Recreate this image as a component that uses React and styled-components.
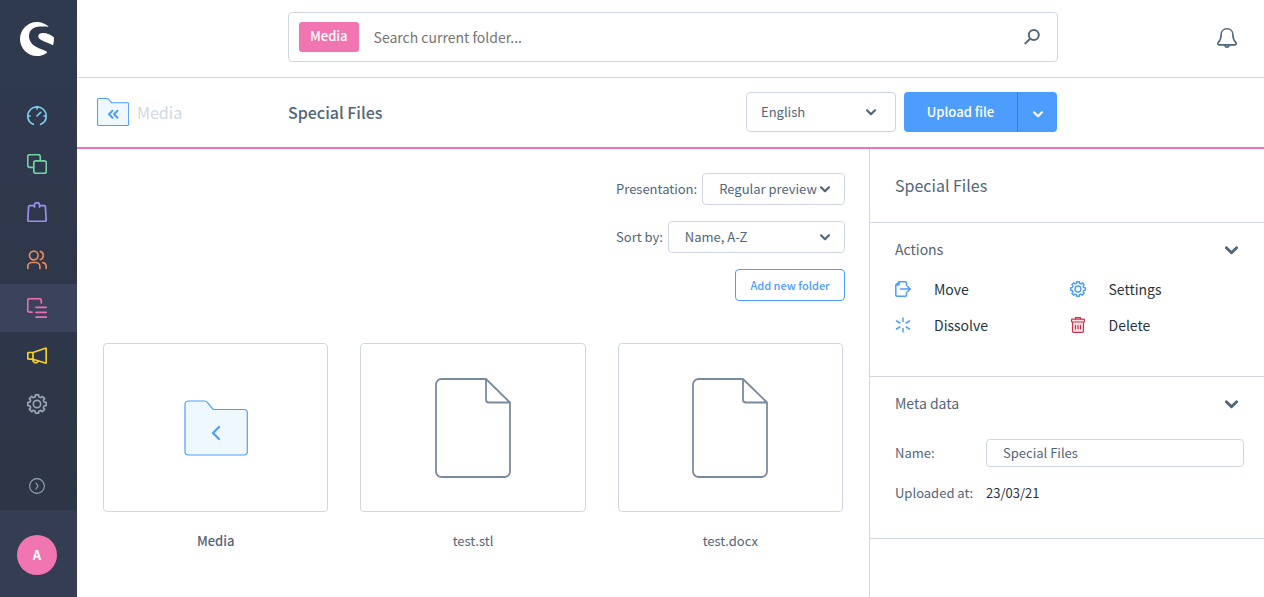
import React from "react";
import styled, { createGlobalStyle, css } from "styled-components";

const blue = "#4d9dff";
const pink = "#f075b1";
const line = "#d1d7e2";
const text = "#52667a";
const dark = "#29333d";

const GlobalStyle = createGlobalStyle`
  *, *::before, *::after { box-sizing: border-box; }
  body {
    margin: 0;
    background: #fff;
    color: ${text};
    font-family: "Noto Sans CJK SC", "Source Sans Pro", "Open Sans", sans-serif;
    font-size: 13px;
    line-height: 20px;
  }
  button, input, select { font: inherit; color: inherit; }
  button { cursor: pointer; }
  h1, h2, h3 { margin: 0; padding: 0; }
`;

const Shell = styled.div`
  display: flex;
  min-height: 100vh;
`;

const Sidebar = styled.aside`
  flex: none;
  width: 77px;
  display: flex;
  flex-direction: column;
  background: linear-gradient(180deg, #303a4f, #2d3445);
`;

const LogoLink = styled.a`
  display: flex;
  padding: 22px 0 36px 20px;
`;

const Nav = styled.nav`
  display: flex;
  flex-direction: column;
  flex: 1;
`;

const NavLink = styled.a`
  display: flex;
  align-items: center;
  height: 48px;
  padding-left: 27px;
  color: ${(p) => p.$color};
  background: ${(p) => (p.$active ? "#3a435b" : "transparent")};
`;

const Toggle = styled.button`
  display: flex;
  align-items: center;
  height: 48px;
  padding: 0 0 0 29px;
  border: 0;
  background: none;
  color: #9aa8b7;
`;

const UserArea = styled.div`
  height: 87px;
  padding: 25px 0 0 17px;
  background: #343d52;
`;

const Avatar = styled.button`
  width: 40px;
  height: 40px;
  padding: 0;
  border: 0;
  border-radius: 50%;
  background: ${pink};
  color: #fff;
  font-weight: 600;
`;

const Page = styled.div`
  flex: 1;
  min-width: 0;
  display: flex;
  flex-direction: column;
`;

const barGrid = css`
  display: grid;
  grid-template-columns: 211px minmax(0, 1fr) 206px;
  align-items: center;
`;

const TopBar = styled.header`
  ${barGrid}
  height: 78px;
  padding-bottom: 3px;
  border-bottom: 1px solid ${line};
`;

const Search = styled.form`
  grid-column: 2;
  display: flex;
  align-items: center;
  height: 50px;
  padding: 0 17px 0 10px;
  border: 1px solid ${line};
  border-radius: 4px;
`;

const SearchTag = styled.span`
  padding: 4px 11px 6px;
  border-radius: 3px;
  background: ${pink};
  color: #fff;
  font-weight: 500;
`;

const SearchInput = styled.input`
  flex: 1;
  min-width: 0;
  padding: 0 15px;
  border: 0;
  outline: 0;
  background: none;
  font-size: 14px;
  &::placeholder { color: #757575; opacity: 1; }
`;

const PlainButton = styled.button`
  display: flex;
  padding: 0;
  border: 0;
  background: none;
`;

const BellSlot = styled.div`
  display: flex;
  justify-content: flex-end;
  padding: 2px 27px 0 0;
`;

const SmartBar = styled.div`
  ${barGrid}
  height: 71px;
  padding-bottom: 1px;
  border-bottom: 2px solid ${pink};
`;

const BackLink = styled.a`
  display: flex;
  align-items: center;
  gap: 8px;
  padding-left: 20px;
  color: ${line};
  font-size: 16px;
  text-decoration: none;
`;

const SmartMain = styled.div`
  display: flex;
  align-items: center;
  gap: 8px;
  padding-right: 1px;
`;

const PageTitle = styled.h1`
  flex: 1;
  font-size: 16px;
  font-weight: 500;
`;

const SelectBox = styled.span`
  position: relative;
  display: flex;
  flex: ${(p) => (p.$width ? "none" : "1")};
  width: ${(p) => p.$width || "auto"};
  svg {
    position: absolute;
    right: ${(p) => p.$inset || "15px"};
    top: 50%;
    margin-top: -3px;
    pointer-events: none;
  }
`;

const Select = styled.select`
  appearance: none;
  width: 100%;
  height: ${(p) => p.$height};
  padding: 0 16px 0 ${(p) => p.$pad};
  border: 1px solid ${line};
  border-radius: 4px;
  background: #fff;
`;

const SplitButton = styled.div`
  display: flex;
  height: 40px;
  border-radius: 4px;
  overflow: hidden;
`;

const UploadButton = styled.button`
  width: ${(p) => p.$width};
  display: flex;
  align-items: center;
  justify-content: center;
  padding: ${(p) => (p.$menu ? "5px 0 0" : "0")};
  border: 0;
  border-left: ${(p) => (p.$menu ? "1px solid #3b7fd4" : "0")};
  background: ${blue};
  color: #fff;
  font-weight: 500;
`;

const Body = styled.div`
  flex: 1;
  display: grid;
  grid-template-columns: minmax(0, 1fr) 395px;
`;

const Library = styled.main`
  padding: 24px 24px 24px 26px;
`;

const Options = styled.div`
  width: 229px;
  margin-left: auto;
  display: flex;
  flex-direction: column;
  gap: 16px;
`;

const OptionRow = styled.label`
  display: flex;
  align-items: center;
  gap: 5px;
  white-space: nowrap;
`;

const OutlineButton = styled.button`
  align-self: flex-end;
  width: 110px;
  height: 32px;
  padding: 0;
  border: 1px solid ${blue};
  border-radius: 4px;
  background: #fff;
  color: ${blue};
  font-size: 11px;
  font-weight: 500;
`;

const MediaGrid = styled.div`
  display: grid;
  grid-template-columns: repeat(auto-fill, minmax(200px, 1fr));
  gap: 32px;
  padding: 42px 2px 0 0;
`;

const MediaItem = styled.a`
  display: flex;
  flex-direction: column;
  gap: 19px;
  color: ${text};
  text-align: center;
  text-decoration: none;
  font-weight: ${(p) => (p.$folder ? 500 : 400)};
`;

const Preview = styled.span`
  display: flex;
  align-items: center;
  justify-content: center;
  height: 169px;
  border: 1px solid ${line};
  border-radius: 4px;
`;

const Details = styled.aside`
  border-left: 1px solid ${line};
`;

const DetailsTitle = styled.h2`
  padding: 26px 25px 27px;
  font-size: 16px;
  font-weight: 400;
  border-bottom: 1px solid ${line};
`;

const Section = styled.section`
  padding: 16px 20px ${(p) => p.$bottom} 25px;
  border-bottom: 1px solid ${line};
`;

const SectionHead = styled.div`
  display: flex;
  align-items: flex-end;
  justify-content: space-between;
  padding-right: 6px;
  margin-bottom: ${(p) => p.$gap};
`;

const SectionTitle = styled.h3`
  font-size: 14px;
  font-weight: 400;
`;

const CollapseButton = styled(PlainButton)`
  padding-bottom: 4px;
`;

const ActionGrid = styled.div`
  display: grid;
  grid-template-columns: 1fr 1fr;
`;

const Action = styled.button`
  display: flex;
  align-items: center;
  gap: 23px;
  height: 36px;
  padding: 0;
  border: 0;
  background: none;
  color: ${dark};
  font-size: 14px;
  svg { color: ${(p) => (p.$danger ? "#c9344a" : blue)}; }
`;

const Field = styled.div`
  display: grid;
  grid-template-columns: 91px minmax(0, 1fr);
  align-items: center;
  min-height: 28px;
  margin-bottom: 12px;
`;

const FieldValue = styled.span`
  color: ${dark};
`;

const NameInput = styled.input`
  width: 100%;
  height: 28px;
  padding: 0 16px 1px;
  border: 1px solid ${line};
  border-radius: 4px;
`;

const Svg = ({ w = 20, h = w, box, sw = 1.7, children, ...rest }) => (
  <svg
    width={w}
    height={h}
    viewBox={box || `0 0 ${w} ${h}`}
    fill="none"
    stroke="currentColor"
    strokeWidth={sw}
    strokeLinecap="round"
    strokeLinejoin="round"
    aria-hidden="true"
    {...rest}
  >
    {children}
  </svg>
);

const Logo = () => (
  <Svg w={34} stroke="none" fill="#fff">
    <path d="M28.300 4.300C25.300 1.600 21.300 0 17 0 7.600 0 0 7.600 0 17s7.600 17 17 17c3.600 0 7-1.200 9.700-3.100.6-.5.500-1-.2-1.400-1.700-1-4.200-1.800-7-3C14 23.900 9 21 9 14.300 9 7.500 14 4.900 19.500 4.500c3-.2 6-.1 8.300.3.600.1.900-.1.500-.5Z" />
    <path d="M18.300 14.200C18.300 12 20.300 11 23 11c4 0 8.200 1.800 10.500 4 .3.300.5.6.5 1 0 2.200-.2 4.400-.7 6.500-.1.500-.4.600-.9.400-3.200-1.600-6.800-2.800-10.200-4.500-2.700-1.300-3.900-2.500-3.900-4.200Z" />
  </Svg>
);

const Chevron = ({ w = 10, h = 7, sw = 2.2 }) => (
  <Svg w={w} h={h} box="0 0 10 7" sw={sw}>
    <path d="M1 1.300l4 4 4-4" />
  </Svg>
);

const gearPath = (() => {
  const teeth = 8;
  const pts = [];
  for (let i = 0; i < teeth; i++) {
    const a = (i * 2 * Math.PI) / teeth - Math.PI / 2;
    [[-0.24, 7.4], [-0.18, 9.3], [0.18, 9.3], [0.24, 7.4]].forEach(([d, r]) =>
      pts.push(`${(10 + r * Math.cos(a + d)).toFixed(2)} ${(10 + r * Math.sin(a + d)).toFixed(2)}`)
    );
  }
  return `M${pts.join("L")}Z`;
})();

const Gear = ({ w = 20, sw = 1.7 }) => (
  <Svg w={w} box="0 0 20 20" sw={sw}>
    <path d={gearPath} />
    <circle cx="10" cy="10" r="3.700" />
  </Svg>
);

const navItems = [
  {
    label: "Dashboard",
    color: "#7acbea",
    icon: (
      <Svg>
        <path d="M6.300 18.300C3 16.800.8 13.700.8 10a9.200 9.200 0 0 1 18.400 0c0 3.700-2.200 6.800-5.500 8.300M10 1v2M1 10h2M17 10h2M10 10l3.700-3.700" />
      </Svg>
    ),
  },
  {
    label: "Catalogues",
    color: "#6fd6a0",
    icon: (
      <Svg>
        <rect x="6.800" y="6.800" width="12.500" height="12.500" rx="2" />
        <path d="M6.500 13.300H2.700a2 2 0 0 1-2-2V2.700a2 2 0 0 1 2-2h8.600a2 2 0 0 1 2 2v3.800" />
      </Svg>
    ),
  },
  {
    label: "Orders",
    color: "#9d90ef",
    icon: (
      <Svg>
        <path d="M5 3.700H2.600a1 1 0 0 0-1 1L.8 18a1.200 1.200 0 0 0 1.200 1.300h16a1.200 1.200 0 0 0 1.200-1.300l-.8-13.300a1 1 0 0 0-1-1H15M7.500 5V2.700c0-1 .8-1.900 2-1.900h1c1.200 0 2 .9 2 1.900V5M7.500 3.700h-2M12.500 3.700h2" />
      </Svg>
    ),
  },
  {
    label: "Customers",
    color: "#e2895f",
    icon: (
      <Svg>
        <circle cx="6.800" cy="5.500" r="4.300" />
        <path d="M.8 18.500v-2.200a4 4 0 0 1 4-3.800h4.100a4 4 0 0 1 4 3.800v2.200M13.300 1.400a4.300 4.300 0 0 1 0 8.200M15.800 12.700a4 4 0 0 1 3.400 3.900v1.900" />
      </Svg>
    ),
  },
  {
    label: "Content",
    color: "#ef6fae",
    active: true,
    icon: (
      <Svg>
        <path d="M5 14.200H2.700a2 2 0 0 1-2-2V2.700a2 2 0 0 1 2-2h9.600a2 2 0 0 1 2 2V5M9 9.300h10.300M9 14.300h10.300M9 19.200h10.300" />
      </Svg>
    ),
  },
  {
    label: "Marketing",
    color: "#f5d029",
    icon: (
      <Svg>
        <path d="M6 6.500 18.300 2.200c.5-.2.900.1.900.6v13.600c0 .5-.4.800-.9.600L6 13.200M6 6.500v6.700H1.500a.7.700 0 0 1-.7-.7V7.200c0-.4.300-.7.700-.7ZM6 13.400a2.800 2.800 0 0 0 5 2.200" />
      </Svg>
    ),
  },
  { label: "Settings", color: "#97a4b2", icon: <Gear /> },
];

const Folder = ({ w, h, sw, arrow }) => (
  <Svg w={w} h={h} box="0 0 64 56" sw={sw}>
    <path
      d="M4.500 1h16c1.300 0 2.200.5 3 1.600l4.500 5.600c.7.900 1.500 1.300 2.600 1.300h29.400c2 0 3.300 1.300 3.300 3.300v39c0 2-1.300 3.200-3.300 3.200H4.500C2.300 55 1 53.800 1 51.800V4.200C1 2.200 2.300 1 4.500 1Z"
      fill="#f0f8ff"
      stroke={blue}
    />
    {arrow}
  </Svg>
);

const Document = () => (
  <Svg w={76} h={100} sw={1.8} color="#7a8a9e">
    <path d="M51 1H6.500A5.500 5.500 0 0 0 1 6.500v87A5.500 5.500 0 0 0 6.500 99h63a5.500 5.500 0 0 0 5.500-5.500V24.500L51 1v20.500a3 3 0 0 0 3 3h21" />
  </Svg>
);

const mediaItems = [
  {
    name: "Media",
    folder: true,
    icon: (
      <Folder
        w={64}
        h={56}
        sw={1.2}
        arrow={<path d="M35 27l-6 6 6 6" stroke={blue} strokeWidth="2.200" />}
      />
    ),
  },
  { name: "test.stl", icon: <Document /> },
  { name: "test.docx", icon: <Document /> },
];

const actions = [
  {
    label: "Move",
    icon: (
      <Svg w={16} sw={1.5}>
        <path d="M11.500 4.500V2a1.300 1.300 0 0 0-1.300-1.300H4L.8 4v9.900c0 .8.6 1.300 1.300 1.300h8.100c.8 0 1.300-.6 1.300-1.300v-2.500M4 .8V4H.8M5.500 8h9.500M12.700 5.500 15.200 8l-2.500 2.500" />
      </Svg>
    ),
  },
  { label: "Settings", icon: <Gear w={16} sw={1.8} /> },
  {
    label: "Dissolve",
    icon: (
      <Svg w={16} sw={1.5}>
        <path d="M8 1v3.500M8 11.500V15M1.500 4l3.300 2M11.200 10l3.300 2M1.500 12l3.300-2M11.200 6l3.300-2" />
      </Svg>
    ),
  },
  {
    label: "Delete",
    danger: true,
    icon: (
      <Svg w={16} sw={1.2}>
        <path
          d="M2.500 5v9c0 .8.500 1.400 1.300 1.400h8.400c.8 0 1.300-.6 1.300-1.400V5"
          fill="#fbe5e8"
        />
        <path
          d="M2.300 2.200h11.400c.5 0 .8.300.8.800v1.200c0 .5-.3.800-.8.800H2.300c-.5 0-.8-.3-.8-.8V3c0-.5.300-.8.800-.8Z"
          fill="#fbe5e8"
        />
        <path d="M5.500 2V.7h5V2M5.500 8.300v3.700M8 8.300v3.700M10.500 8.300v3.700" />
      </Svg>
    ),
  },
];

function Option({ label, value }) {
  return (
    <OptionRow>
      {label}
      <SelectBox>
        <Select $height="32px" $pad="16px" defaultValue={value}>
          <option>{value}</option>
        </Select>
        <Chevron />
      </SelectBox>
    </OptionRow>
  );
}

export default function App() {
  return (
    <>
      <GlobalStyle />
      <Shell>
        <Sidebar>
          <LogoLink href="#" aria-label="Home">
            <Logo />
          </LogoLink>
          <Nav>
            {navItems.map((item) => (
              <NavLink
                key={item.label}
                href="#"
                aria-label={item.label}
                $color={item.color}
                $active={item.active}
              >
                {item.icon}
              </NavLink>
            ))}
          </Nav>
          <Toggle aria-label="Expand menu">
            <Svg w={16} sw={1.1}>
              <circle cx="8" cy="8" r="7.400" />
              <path d="M7 5l2 3-2 3" />
            </Svg>
          </Toggle>
          <UserArea>
            <Avatar>A</Avatar>
          </UserArea>
        </Sidebar>
        <Page>
          <TopBar>
            <Search role="search">
              <SearchTag>Media</SearchTag>
              <SearchInput
                aria-label="Search current folder"
                placeholder="Search current folder..."
              />
              <PlainButton type="button" aria-label="Search">
                <Svg w={16} sw={2} color={text}>
                  <circle cx="9.800" cy="6" r="5" />
                  <path d="M6.200 9.700 1.300 14.400" />
                </Svg>
              </PlainButton>
            </Search>
            <BellSlot>
              <PlainButton aria-label="Notifications">
                <Svg sw={1.6} color={text}>
                  <path d="M10 .8c-3.600 0-5.900 2.400-5.900 5.900 0 4-.8 5.800-2.600 7.500-1.300 1.200-.8 2.700.7 2.700h15.600c1.500 0 2-1.500.7-2.700-1.800-1.700-2.600-3.500-2.600-7.500C15.900 3.200 13.600.8 10 .8ZM7.800 17.200c.3 1.300 1 2 2.200 2s1.900-.7 2.200-2" />
                </Svg>
              </PlainButton>
            </BellSlot>
          </TopBar>
          <SmartBar>
            <BackLink href="#">
              <Folder
                w={32}
                h={28}
                sw={2.2}
                arrow={
                  <path
                    d="M31 25.500l-7 7 7 7M41 25.500l-7 7 7 7"
                    stroke={blue}
                    strokeWidth="4"
                  />
                }
              />
              Media
            </BackLink>
            <SmartMain>
              <PageTitle>Special Files</PageTitle>
              <SelectBox $width="150px" $inset="20px">
                <Select
                  $height="40px"
                  $pad="14px"
                  aria-label="Language"
                  defaultValue="English"
                >
                  <option>English</option>
                </Select>
                <Chevron />
              </SelectBox>
              <SplitButton>
                <UploadButton $width="113px">Upload file</UploadButton>
                <UploadButton $width="40px" $menu aria-label="Upload options">
                  <Chevron />
                </UploadButton>
              </SplitButton>
            </SmartMain>
          </SmartBar>
          <Body>
            <Library>
              <Options>
                <Option label="Presentation:" value="Regular preview" />
                <Option label="Sort by:" value="Name, A-Z" />
                <OutlineButton>Add new folder</OutlineButton>
              </Options>
              <MediaGrid>
                {mediaItems.map((item) => (
                  <MediaItem key={item.name} href="#" $folder={item.folder}>
                    <Preview>{item.icon}</Preview>
                    {item.name}
                  </MediaItem>
                ))}
              </MediaGrid>
            </Library>
            <Details>
              <DetailsTitle>Special Files</DetailsTitle>
              <Section $bottom="33px">
                <SectionHead $gap="12px">
                  <SectionTitle>Actions</SectionTitle>
                  <CollapseButton aria-label="Collapse actions">
                    <Chevron w={13} h={9} />
                  </CollapseButton>
                </SectionHead>
                <ActionGrid>
                  {actions.map((a) => (
                    <Action key={a.label} $danger={a.danger}>
                      {a.icon}
                      {a.label}
                    </Action>
                  ))}
                </ActionGrid>
              </Section>
              <Section $bottom="19px">
                <SectionHead $gap="26px">
                  <SectionTitle>Meta data</SectionTitle>
                  <CollapseButton aria-label="Collapse meta data">
                    <Chevron w={13} h={9} />
                  </CollapseButton>
                </SectionHead>
                <Field>
                  <label htmlFor="folder-name">Name:</label>
                  <NameInput id="folder-name" defaultValue="Special Files" />
                </Field>
                <Field>
                  <span>Uploaded at:</span>
                  <FieldValue>23/03/21</FieldValue>
                </Field>
              </Section>
            </Details>
          </Body>
        </Page>
      </Shell>
    </>
  );
}
